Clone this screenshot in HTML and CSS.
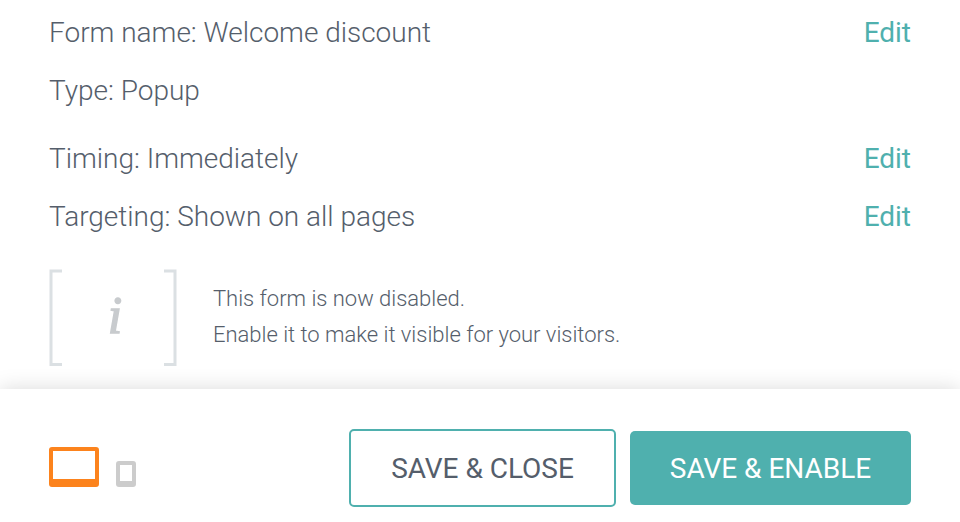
FILE: index.html
```html
<!DOCTYPE html>
<html lang="en">
<head>
<meta charset="utf-8">
<title>Form summary</title>
<link rel="stylesheet" href="styles.css">
</head>
<body>
<main class="summary">
  <div class="row"><span class="label">Form name: Welcome discount</span><a class="edit">Edit</a></div>
  <div class="row row-type"><span class="label">Type: Popup</span></div>
  <div class="row"><span class="label">Timing: Immediately</span><a class="edit">Edit</a></div>
  <div class="row"><span class="label">Targeting: Shown on all pages</span><a class="edit">Edit</a></div>
  <section class="notice">
    <div class="info">
      <svg class="bracket" viewBox="0 0 14 98"><path d="M13 2H2V95.5H13"/></svg>
      <span class="info-letter">i</span>
      <svg class="bracket" viewBox="0 0 14 98"><path d="M1 2H12V95.5H1"/></svg>
    </div>
    <p class="message">This form is now disabled.<br>Enable it to make it visible for your visitors.</p>
  </section>
</main>
<footer class="actions">
  <div class="devices">
    <span class="device desktop"></span>
    <span class="device mobile"></span>
  </div>
  <button class="button outline">SAVE &amp; CLOSE</button>
  <button class="button solid">SAVE &amp; ENABLE</button>
</footer>
</body>
</html>
```
FILE: styles.css
```css
* { box-sizing: border-box; }
body {
  margin: 0;
  height: 522px;
  overflow: hidden;
  display: flex;
  flex-direction: column;
  background: #fff;
  color: #555e6b;
  font-family: Roboto, sans-serif;
}
.summary { height: 389px; padding: 4px 49px 0; flex: none; }
.row {
  height: 58px;
  display: flex;
  justify-content: space-between;
  font-size: 28px;
  line-height: 58px;
  font-weight: 300;
  letter-spacing: -.01px;
}
.row-type { height: 68px; }
.edit { color: #4fb0ae; font-weight: 400; }
.notice { display: flex; gap: 36px; margin-top: 23px; }
.info {
  width: 128px;
  height: 98px;
  display: flex;
  align-items: center;
  justify-content: space-between;
  filter: blur(.5px);
}
.bracket { width: 14px; height: 98px; fill: none; stroke: #dbe0e3; stroke-width: 3; }
.info-letter {
  padding: 0 0 4px 4px;
  font: italic 400 52px/1 "Liberation Serif", serif;
  color: #c8cbce;
  -webkit-text-stroke: 1.4px #c8cbce;
}
.message { margin: 12px 0 0; font-size: 22px; line-height: 36px; font-weight: 300; letter-spacing: -.02px; }
.actions {
  height: 133px;
  flex: none;
  display: flex;
  align-items: flex-start;
  padding: 40px 49px 0;
  box-shadow: 0 0 20px rgba(0, 0, 0, .15);
}
.devices { display: flex; align-items: flex-end; gap: 17px; margin: 18px auto 0 0; }
.device { border-radius: 3px; }
.desktop { width: 50px; height: 40px; border: 4px solid #fc831d; border-bottom-width: 8px; }
.mobile { width: 20px; height: 26px; border: 4px solid #ccc; border-bottom-width: 6px; }
.button { padding: 2px 0 0; border: 0; border-radius: 5px; font: 400 28px/1 Roboto, sans-serif; letter-spacing: -.02px; }
.outline { width: 267px; height: 78px; border: 2px solid #4fb0ae; background: #fff; color: #555e6b; }
.solid { width: 281px; height: 74px; margin: 2px 0 0 14px; background: #4fb0ae; color: #fff; }
```
